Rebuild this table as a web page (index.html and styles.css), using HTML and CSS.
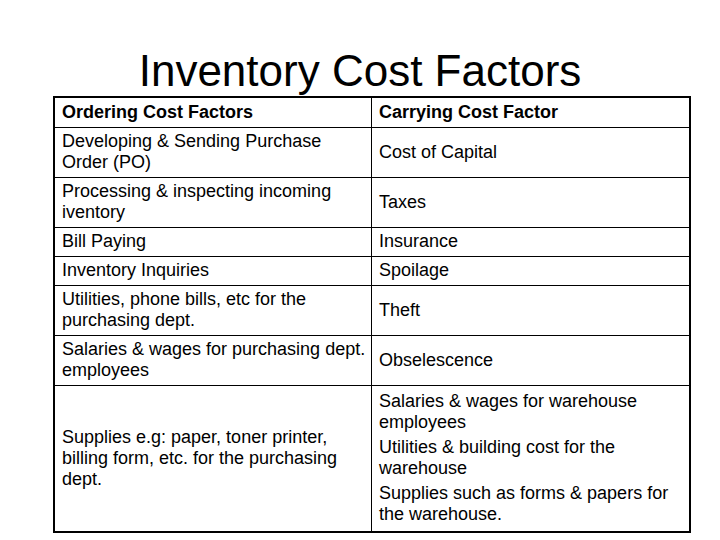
FILE: index.html
```html
<!DOCTYPE html>
<html>
<head>
<meta charset="utf-8">
<link rel="stylesheet" href="styles.css">
</head>
<body>
<h1 class="title">Inventory Cost Factors</h1>
<table class="factors">
  <tr class="r-head">
    <th>Ordering Cost Factors</th>
    <th>Carrying Cost Factor</th>
  </tr>
  <tr class="r2">
    <td>Developing &amp; Sending Purchase Order (PO)</td>
    <td>Cost of Capital</td>
  </tr>
  <tr class="r2">
    <td>Processing &amp; inspecting incoming iventory</td>
    <td>Taxes</td>
  </tr>
  <tr class="r1">
    <td>Bill Paying</td>
    <td>Insurance</td>
  </tr>
  <tr class="r1">
    <td>Inventory Inquiries</td>
    <td>Spoilage</td>
  </tr>
  <tr class="r2">
    <td>Utilities, phone bills, etc for the purchasing dept.</td>
    <td>Theft</td>
  </tr>
  <tr class="r2">
    <td>Salaries &amp; wages for purchasing dept. employees</td>
    <td>Obselescence</td>
  </tr>
  <tr class="r-last">
    <td>Supplies e.g: paper, toner printer, billing form, etc. for the purchasing dept.</td>
    <td>
      <p class="para">Salaries &amp; wages for warehouse employees</p>
      <p class="para">Utilities &amp; building cost for the warehouse</p>
      <p class="para">Supplies such as forms &amp; papers for the warehouse.</p>
    </td>
  </tr>
</table>
</body>
</html>
```
FILE: styles.css
```css
html, body {
  margin: 0;
  padding: 0;
  background: #ffffff;
  color: #000000;
  font-family: "Liberation Sans", Arial, sans-serif;
}

.title {
  margin: 44px 0 0 0;
  height: 52px;
  line-height: 53px;
  font-size: 44px;
  font-weight: normal;
  text-align: center;
}

.factors {
  margin-left: 53px;
  width: 638px;
  border-collapse: collapse;
  border: 2px solid #000;
  table-layout: fixed;
}

.factors th,
.factors td {
  border: 1px solid #000;
  padding: 3px 6px 4px 7px;
  font-size: 18px;
  line-height: 21px;
  text-align: left;
  vertical-align: middle;
}

.factors th:first-child,
.factors td:first-child {
  width: 306px;
  padding-right: 3px;
  border-left: 2px solid #000;
}

.factors th {
  font-weight: bold;
}

.r-head th { height: 22px; }
.r1 td { height: 21px; }
.r2 td { height: 42px; }
.r-last td { height: 138px; }

.para {
  margin: 0 0 4px 0;
}
.para:last-child {
  margin-bottom: 0;
}
```
